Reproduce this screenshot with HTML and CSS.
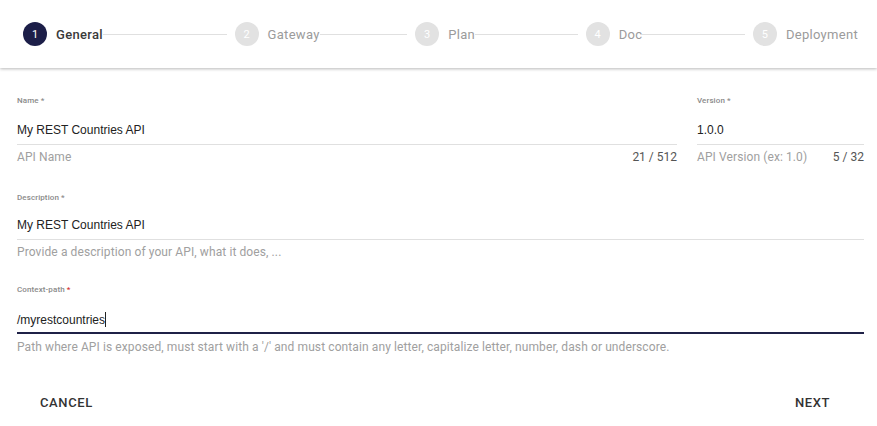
FILE: index.html
```html
<!DOCTYPE html>
<html>
<head>
<meta charset="utf-8">
<link rel="stylesheet" href="styles.css">
</head>
<body>
<header class="stepper">
  <div class="step active"><span class="num">1</span><span class="lbl">General</span></div>
  <div class="line line-1"></div>
  <div class="step"><span class="num">2</span><span class="lbl">Gateway</span></div>
  <div class="line line-2"></div>
  <div class="step"><span class="num">3</span><span class="lbl">Plan</span></div>
  <div class="line line-3"></div>
  <div class="step"><span class="num">4</span><span class="lbl">Doc</span></div>
  <div class="line line-4"></div>
  <div class="step"><span class="num">5</span><span class="lbl">Deployment</span></div>
</header>
<main class="form">
  <div class="row">
    <div class="field grow">
      <div class="label">Name *</div>
      <div class="input">My REST Countries API</div>
      <div class="hint"><span>API Name</span><span class="count">21 / 512</span></div>
    </div>
    <div class="field version">
      <div class="label">Version *</div>
      <div class="input">1.0.0</div>
      <div class="hint"><span>API Version (ex: 1.0)</span><span class="count">5 / 32</span></div>
    </div>
  </div>
  <div class="field desc">
    <div class="label">Description *</div>
    <div class="input">My REST Countries API</div>
    <div class="hint"><span>Provide a description of your API, what it does, ...</span></div>
  </div>
  <div class="field focused">
    <div class="label">Context-path <span class="req">*</span></div>
    <div class="input">/myrestcountries<span class="caret"></span></div>
    <div class="hint"><span>Path where API is exposed, must start with a '/' and must contain any letter, capitalize letter, number, dash or underscore.</span></div>
  </div>
</main>
<footer class="actions">
  <button class="btn">CANCEL</button>
  <button class="btn">NEXT</button>
</footer>
</body>
</html>
```

FILE: styles.css
```css
html, body {
  margin: 0;
  padding: 0;
  background: #fff;
  font-family: Roboto, "Noto Sans", sans-serif;
}

.stepper {
  height: 68px;
  display: flex;
  align-items: center;
  padding: 0 19px 0 23px;
  box-shadow: 0 1px 3px rgba(0,0,0,0.28);
  box-sizing: border-box;
  position: relative;
}

.step {
  display: flex;
  align-items: center;
}

.num {
  width: 24px;
  height: 24px;
  border-radius: 50%;
  background: #e2e2e2;
  color: #fff;
  font-size: 11px;
  display: flex;
  align-items: center;
  justify-content: center;
  margin-right: 9px;
}

.lbl {
  font-size: 13px;
  color: #9b9b9b;
  letter-spacing: 0.3px;
}

.step.active .num {
  background: #1c1e48;
  color: #fff;
}

.step.active .lbl {
  color: #3a3a3a;
  font-weight: 500;
}

.line {
  flex-basis: 0;
  height: 1px;
  background: #e0e0e0;
  margin-right: 8px;
}

.line-1 { flex-grow: 123; }
.line-2 { flex-grow: 87; }
.line-3 { flex-grow: 102; }
.line-4 { flex-grow: 102; }

.form {
  padding: 28px 13px 0 17px;
}

.row {
  display: flex;
  gap: 20px;
}

.grow {
  flex: 1;
}

.version {
  width: 167px;
}

.field {
  margin-bottom: 28px;
}

.field.desc {
  margin-bottom: 25px;
}

.label {
  font-family: Roboto, sans-serif;
  font-size: 8px;
  line-height: 10px;
  color: #8a8a8a;
  font-weight: 500;
  letter-spacing: 0.1px;
}

.req {
  color: #d32f2f;
}

.input {
  font-family: "Liberation Sans", Arial, sans-serif;
  font-size: 12px;
  line-height: 16px;
  color: #222;
  padding: 16px 0 6px;
  border-bottom: 1px solid #e0e0e0;
}

.desc .input {
  padding-top: 14px;
}

.focused .input {
  padding-top: 17px;
  border-bottom: 2px solid #1f2147;
  padding-bottom: 4px;
}

.caret {
  display: inline-block;
  width: 1px;
  height: 15px;
  background: #222;
  vertical-align: -3px;
}

.hint {
  display: flex;
  justify-content: space-between;
  margin-top: 4px;
  font-size: 12px;
  line-height: 16px;
  color: #a0a0a0;
  letter-spacing: 0.1px;
}

.focused .hint {
  margin-top: 5px;
}

.count {
  color: #555;
  letter-spacing: 0;
}

.actions {
  display: flex;
  justify-content: space-between;
  padding: 2px 47px 0 40px;
}

.btn {
  border: none;
  background: none;
  padding: 0;
  font-family: Roboto, sans-serif;
  font-weight: 500;
  font-size: 13px;
  color: #333;
  letter-spacing: 0.6px;
  line-height: 36px;
}
```
